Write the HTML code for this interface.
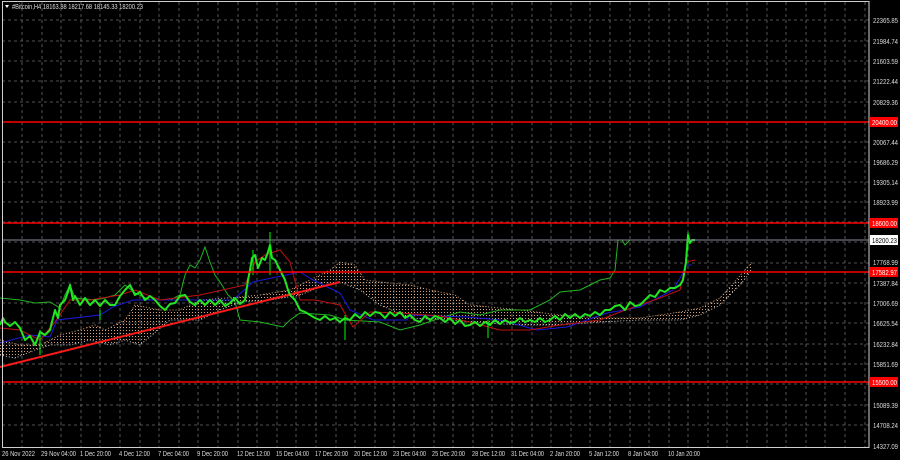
<!DOCTYPE html>
<html><head><meta charset="utf-8"><style>
html,body{margin:0;padding:0;background:#000;}
body{width:900px;height:460px;overflow:hidden;position:relative;font-family:"Liberation Sans",sans-serif;}
svg{position:absolute;left:0;top:0;}
</style></head><body>
<svg width="900" height="460" xmlns="http://www.w3.org/2000/svg" font-family="Liberation Sans, sans-serif" font-size="7">
<defs>
<pattern id="dots" width="3" height="3" patternUnits="userSpaceOnUse"><rect x="0" y="0" width="1" height="1" fill="#d8a27a"/></pattern>
</defs>
<rect width="900" height="460" fill="#000"/>
<g stroke="#6a6a6a" stroke-width="0.8" stroke-dasharray="3,3">
<path d="M22 2V447M42 2V447M61 2V447M81 2V447M100 2V447M120 2V447M140 2V447M159 2V447M179 2V447M198 2V447M218 2V447M238 2V447M257 2V447M277 2V447M296 2V447M316 2V447M336 2V447M355 2V447M375 2V447M394 2V447M414 2V447M434 2V447M453 2V447M473 2V447M492 2V447M512 2V447M532 2V447M551 2V447M571 2V447M590 2V447M610 2V447M630 2V447M649 2V447M669 2V447M688 2V447M708 2V447M727 2V447M747 2V447M767 2V447M786 2V447M806 2V447M825 2V447M845 2V447M865 2V447"/>
<path d="M2 20H869M2 41H869M2 61H869M2 81H869M2 102H869M2 122H869M2 142H869M2 162H869M2 182H869M2 202H869M2 222H869M2 242H869M2 263H869M2 283H869M2 303H869M2 323H869M2 344H869M2 364H869M2 384H869M2 405H869M2 425H869"/>
</g>
<path d="M0 340 L20 345 L40 345 L60 335 L80 330 L95 325 L105 330 L125 320 L135 305 L160 310 L180 310 L200 300 L240 297 L260 295 L290 290 L310 280 L330 270 L340 262 L355 265 L365 280 L380 282 L410 285 L430 290 L455 295 L470 305 L520 310 L560 315 L600 318 L640 318 L680 312 L700 308 L720 298 L745 270 L752 262 L752 270 L740 285 L720 305 L700 315 L680 320 L640 320 L600 322 L560 325 L520 325 L470 322 L450 320 L410 318 L380 305 L360 290 L340 282 L320 287 L300 295 L270 300 L240 302 L220 310 L200 320 L170 320 L140 345 L125 340 L110 345 L90 340 L70 345 L50 345 L35 350 L15 358 L0 355Z" fill="url(#dots)"/>
<path d="M0 340 L20 345 L40 345 L60 335 L80 330 L95 325 L105 330 L125 320 L135 305 L160 310 L180 310 L200 300 L240 297 L260 295 L290 290 L310 280 L330 270 L340 262 L355 265 L365 280 L380 282 L410 285 L430 290 L455 295 L470 305 L520 310 L560 315 L600 318 L640 318 L680 312 L700 308 L720 298 L745 270 L752 262" fill="none" stroke="#d8a27a" stroke-width="1" stroke-dasharray="1,2"/>
<path d="M0 355 L15 358 L35 350 L50 345 L70 345 L90 340 L110 345 L125 340 L140 345 L170 320 L200 320 L220 310 L240 302 L270 300 L300 295 L320 287 L340 282 L360 290 L380 305 L410 318 L450 320 L470 322 L520 325 L560 325 L600 322 L640 320 L680 320 L700 315 L720 305 L740 285 L752 270" fill="none" stroke="#c8c8c8" stroke-width="1" stroke-dasharray="1,2"/>
<polyline fill="none" stroke="#1fb51f" stroke-width="1" points="0,298 20,300 35,303 50,302 60,308 65,295 70,285 75,298 95,300 105,298 115,295 125,285 135,293 150,300 170,300 180,295 185,275 190,265 195,268 200,260 205,247 210,262 215,275 220,282 228,295 235,302 240,320 260,322 283,327 290,320 300,313 330,315 345,320 380,322 400,330 420,325 440,318 460,312 480,315 500,310 530,310 550,300 560,292 580,290 590,285 600,280 610,278 615,270 618,240 622,240 625,245 630,240"/>
<polyline fill="none" stroke="#1a1ae0" stroke-width="1" points="0,343 30,335 50,337 57,320 100,315 113,307 133,300 160,300 187,300 233,300 253,282 300,272 313,280 340,293 350,310 373,320 407,320 410,315 467,317 500,320 537,330 567,327 607,313 640,307 673,290 683,273 686,265 692,265"/>
<polyline fill="none" stroke="#c01010" stroke-width="1" points="0,328 20,330 40,340 55,322 70,300 90,300 120,295 135,290 160,300 200,295 245,285 255,262 265,255 280,250 290,262 300,300 315,300 340,305 353,327 370,312 400,313 440,316 470,322 500,330 530,330 560,325 600,320 620,312 640,305 660,298 680,290 686,262 695,260"/>
<line x1="0" y1="367" x2="340" y2="282" stroke="#ff1a1a" stroke-width="2"/>
<polyline fill="none" stroke="#22e622" stroke-width="2" stroke-linejoin="round" points="0,325 3,318 5,322 10,326 15,322 20,328 25,340 30,336 35,345 40,332 45,335 50,330 55,310 58,318 60,305 65,300 68,292 70,285 73,300 75,296 80,305 85,298 90,305 95,300 100,306 105,300 110,305 115,305 120,296 125,290 130,285 135,295 140,292 145,300 150,296 155,300 160,306 165,310 170,304 175,303 180,296 185,295 190,302 195,305 200,300 205,305 210,300 215,305 220,300 225,306 230,303 235,298 240,304 245,300 248,280 250,270 252,258 255,255 258,268 262,258 265,260 268,252 270,245 272,258 275,260 278,266 280,270 283,276 285,280 288,290 290,295 295,300 300,310 305,312 310,315 315,318 320,320 325,316 330,320 335,318 340,322 345,318 350,320 355,314 360,318 365,312 370,316 375,312 380,313 385,318 390,312 395,316 400,312 405,318 410,315 415,320 420,322 425,316 430,320 435,316 440,318 445,322 450,318 455,324 460,320 465,326 470,325 475,322 480,326 485,322 490,325 495,320 500,324 505,320 510,323 515,322 520,318 525,322 530,320 535,322 540,318 545,322 550,320 555,316 560,320 565,314 570,318 575,314 580,318 585,314 590,316 595,312 600,315 605,310 610,310 615,306 620,305 625,310 630,302 635,306 640,305 645,300 650,295 655,297 660,290 665,292 670,288 675,288 680,285 683,280 686,262 688,235 690,243 692,240 695,240"/>
<g stroke="#00ff00" stroke-width="1">
<path d="M270 232V275M253 250V275M100 310V320M40 330V355M345 315V340M488 320V338M688 232V250"/>
</g>
<g stroke="#ff0000" stroke-width="1.5">
<line x1="2" y1="122" x2="869" y2="122"/>
<line x1="2" y1="223" x2="869" y2="223"/>
<line x1="2" y1="272" x2="869" y2="272"/>
<line x1="2" y1="382" x2="869" y2="382"/>
</g>
<line x1="2" y1="240" x2="869" y2="240" stroke="#8a8a9a" stroke-width="1"/>
<rect x="2.5" y="1.5" width="866.5" height="446" fill="none" stroke="#cfcfcf" stroke-width="1"/>
<g fill="#dcdcdc">
<text x="873" y="23" textLength="25" lengthAdjust="spacingAndGlyphs">22365.85</text><text x="873" y="44" textLength="25" lengthAdjust="spacingAndGlyphs">21984.74</text><text x="873" y="64" textLength="25" lengthAdjust="spacingAndGlyphs">21603.59</text><text x="873" y="84" textLength="25" lengthAdjust="spacingAndGlyphs">21222.44</text><text x="873" y="105" textLength="25" lengthAdjust="spacingAndGlyphs">20829.36</text><text x="873" y="145" textLength="25" lengthAdjust="spacingAndGlyphs">20067.44</text><text x="873" y="165" textLength="25" lengthAdjust="spacingAndGlyphs">19686.29</text><text x="873" y="185" textLength="25" lengthAdjust="spacingAndGlyphs">19305.14</text><text x="873" y="205" textLength="25" lengthAdjust="spacingAndGlyphs">18923.99</text><text x="873" y="265" textLength="25" lengthAdjust="spacingAndGlyphs">17768.99</text><text x="873" y="286" textLength="25" lengthAdjust="spacingAndGlyphs">17387.84</text><text x="873" y="306" textLength="25" lengthAdjust="spacingAndGlyphs">17006.69</text><text x="873" y="326" textLength="25" lengthAdjust="spacingAndGlyphs">16625.54</text><text x="873" y="347" textLength="25" lengthAdjust="spacingAndGlyphs">16232.84</text><text x="873" y="367" textLength="25" lengthAdjust="spacingAndGlyphs">15851.69</text><text x="873" y="408" textLength="25" lengthAdjust="spacingAndGlyphs">15089.39</text><text x="873" y="428" textLength="25" lengthAdjust="spacingAndGlyphs">14708.24</text><text x="873" y="449" textLength="25" lengthAdjust="spacingAndGlyphs">14327.09</text>
</g>
<rect x="870" y="117" width="28" height="10" fill="#ff0000"/><text x="872" y="125" fill="#fff" textLength="25" lengthAdjust="spacingAndGlyphs">20400.00</text>
<rect x="870" y="218" width="28" height="10" fill="#ff0000"/><text x="872" y="226" fill="#fff" textLength="25" lengthAdjust="spacingAndGlyphs">18600.00</text>
<rect x="870" y="235" width="28" height="10" fill="#fff"/><text x="872" y="243" fill="#000" textLength="25" lengthAdjust="spacingAndGlyphs">18200.23</text>
<rect x="870" y="267" width="28" height="10" fill="#ff0000"/><text x="872" y="275" fill="#fff" textLength="25" lengthAdjust="spacingAndGlyphs">17582.97</text>
<rect x="870" y="377" width="28" height="10" fill="#ff0000"/><text x="872" y="385" fill="#fff" textLength="25" lengthAdjust="spacingAndGlyphs">15500.00</text>
<g fill="#dcdcdc">
<text x="2" y="456" textLength="33" lengthAdjust="spacingAndGlyphs">26 Nov 2022</text><text x="41" y="456" textLength="35" lengthAdjust="spacingAndGlyphs">29 Nov 04:00</text><text x="80" y="456" textLength="31" lengthAdjust="spacingAndGlyphs">1 Dec 20:00</text><text x="119" y="456" textLength="31" lengthAdjust="spacingAndGlyphs">4 Dec 12:00</text><text x="158" y="456" textLength="31" lengthAdjust="spacingAndGlyphs">7 Dec 04:00</text><text x="197" y="456" textLength="31" lengthAdjust="spacingAndGlyphs">9 Dec 20:00</text><text x="237" y="456" textLength="33" lengthAdjust="spacingAndGlyphs">12 Dec 12:00</text><text x="276" y="456" textLength="33" lengthAdjust="spacingAndGlyphs">15 Dec 04:00</text><text x="315" y="456" textLength="33" lengthAdjust="spacingAndGlyphs">17 Dec 20:00</text><text x="354" y="456" textLength="33" lengthAdjust="spacingAndGlyphs">20 Dec 12:00</text><text x="393" y="456" textLength="33" lengthAdjust="spacingAndGlyphs">23 Dec 04:00</text><text x="432" y="456" textLength="33" lengthAdjust="spacingAndGlyphs">25 Dec 20:00</text><text x="472" y="456" textLength="33" lengthAdjust="spacingAndGlyphs">28 Dec 12:00</text><text x="511" y="456" textLength="33" lengthAdjust="spacingAndGlyphs">31 Dec 04:00</text><text x="550" y="456" textLength="30" lengthAdjust="spacingAndGlyphs">2 Jan 20:00</text><text x="589" y="456" textLength="30" lengthAdjust="spacingAndGlyphs">5 Jan 12:00</text><text x="628" y="456" textLength="30" lengthAdjust="spacingAndGlyphs">8 Jan 04:00</text><text x="668" y="456" textLength="32" lengthAdjust="spacingAndGlyphs">10 Jan 20:00</text>
</g>
<path d="M5 5L9 5L7 8Z" fill="#fff"/>
<text x="12" y="9" fill="#dcdcdc" textLength="131" lengthAdjust="spacingAndGlyphs">#Bitcoin,H4  18163.88 18217.68 18145.33 18200.23</text>
</svg>
</body></html>
